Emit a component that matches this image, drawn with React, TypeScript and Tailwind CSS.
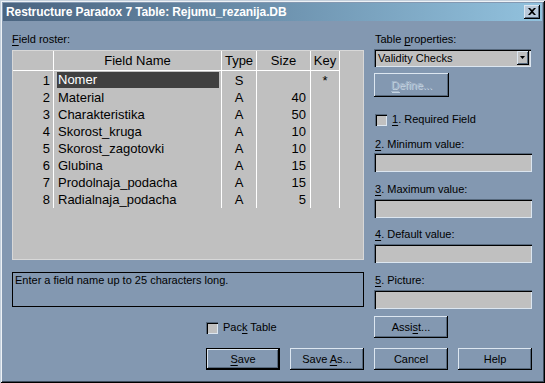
import type { ReactNode } from "react";

const raised =
  "shadow-[inset_-1px_-1px_0_#000,inset_1px_1px_0_#dce6f0,inset_-2px_-2px_0_#56687c]";
const sunken =
  "shadow-[inset_1px_1px_0_#56687c,inset_2px_2px_0_#000,inset_-1px_-1px_0_#dce6f0,inset_-2px_-2px_0_#c0c0c0]";

const FIELDS = [
  { name: "Nomer", type: "S", size: "", key: "*" },
  { name: "Material", type: "A", size: "40", key: "" },
  { name: "Charakteristika", type: "A", size: "50", key: "" },
  { name: "Skorost_kruga", type: "A", size: "10", key: "" },
  { name: "Skorost_zagotovki", type: "A", size: "10", key: "" },
  { name: "Glubina", type: "A", size: "15", key: "" },
  { name: "Prodolnaja_podacha", type: "A", size: "15", key: "" },
  { name: "Radialnaja_podacha", type: "A", size: "5", key: "" },
];

function U({ children }: { children: ReactNode }) {
  return <span className="underline decoration-1 underline-offset-[2px]">{children}</span>;
}

function Button({ children, width = "w-[74px]", isDefault = false, disabled = false }: {
  children: ReactNode;
  width?: string;
  isDefault?: boolean;
  disabled?: boolean;
}) {
  const face = (
    <div
      className={`flex h-full w-full items-center justify-center ${raised} ${
        disabled ? "text-[#a3b6ca] [text-shadow:1px_1px_0_#c6d4e2]" : "text-black"
      }`}
    >
      <span className="whitespace-pre">{children}</span>
    </div>
  );
  return (
    <div className={`${width} ${disabled ? "h-[24px]" : "h-[22px]"} ${isDefault ? "border border-black" : ""}`}>{face}</div>
  );
}

function Field({ label, mt, imt }: { label: ReactNode; mt: string; imt: string }) {
  return (
    <>
      <div className={`${mt} h-[13px] leading-[13px] pl-px`}>{label}</div>
      <div className={`${imt} h-[19px] w-[158px] bg-[#c0c0c0] ${sunken}`} />
    </>
  );
}

function Check({ children }: { children: ReactNode }) {
  return (
    <div className="flex h-[13px] items-center gap-[5px]">
      <div className={`h-[12px] w-[12px] bg-[#c0c0c0] ${sunken}`} />
      <span className="leading-[13px]">{children}</span>
    </div>
  );
}

type Row = (typeof FIELDS)[number];

function Roster() {
  const cols = [
    { head: "", w: "w-[41px]", cell: (_f: Row, i: number) => <div className="pr-[3px] text-right">{i + 1}</div> },
    {
      head: "Field Name",
      w: "w-[168px]",
      cell: (f: Row, i: number) =>
        i === 0 ? (
          <div className="ml-[3px] mr-[2px] h-[16px] bg-[#404040] pl-[1px] leading-[16px] text-white">{f.name}</div>
        ) : (
          <div className="pl-[4px]">{f.name}</div>
        ),
    },
    { head: "Type", w: "w-[35px]", cell: (f: Row) => <div className="text-center">{f.type}</div> },
    { head: "Size", w: "w-[54px]", cell: (f: Row) => <div className="pr-[4px] text-right">{f.size}</div> },
    { head: "Key", w: "w-[29px]", cell: (f: Row) => <div className="text-center">{f.key}</div> },
  ];

  return (
    <div className="mt-[4px] flex h-[210px] w-[352px] items-start border border-[#d8d8d8] bg-[#c0c0c0] text-[13px] text-black">
      {cols.map((c) => (
        <div key={c.head || "n"} className={`${c.w} flex shrink-0 flex-col border-r border-white`}>
          <div className="flex h-[20px] items-center justify-center border-b border-white leading-[19px]">{c.head}</div>
          <div className="pt-px">
            {FIELDS.map((f, i) => (
              <div key={f.name} className="h-[17px] leading-[17px] whitespace-nowrap">
                {c.cell(f, i)}
              </div>
            ))}
          </div>
        </div>
      ))}
    </div>
  );
}

export default function App() {
  return (
    <div className="relative h-[383px] w-[545px] overflow-hidden bg-[#8398b1] font-['Liberation_Sans',Arial,sans-serif] text-[11px] text-black shadow-[inset_1px_1px_0_#c4d0dc,inset_-1px_-1px_0_#000,inset_2px_2px_0_#eef2f6,inset_-2px_-2px_0_#3f4c5c]">
      {/* Title bar */}
      <div className="mx-[3px] mt-[3px] flex h-[18px] items-center justify-between bg-linear-to-r from-[#4a6480] to-[#92c2de] pl-[3px] pr-[2px]">
        <span className="text-[12px] font-bold tracking-[-0.1px] text-white">
          Restructure Paradox 7 Table: Rejumu_rezanija.DB
        </span>
        <div className={`flex h-[14px] w-[16px] items-center justify-center bg-[#b9c9da] ${raised}`}>
          <svg width="8" height="7" viewBox="0 0 8 7" className="mb-px">
            <path d="M0 0h2l2 2 2-2h2L5 3.5 8 7H6L4 5 2 7H0l3-3.5z" fill="#000" />
          </svg>
        </div>
      </div>

      {/* Body */}
      <div className="flex gap-[10px] pl-[12px]">
        {/* Left */}
        <div className="flex w-[352px] flex-col">
          <div className="mt-[12px] h-[13px] leading-[13px]">
            <U>F</U>ield roster:
          </div>
          <Roster />
          <div className="mt-[12px] h-[35px] border border-black px-[2px] pt-[1px] leading-[13px]">
            Enter a field name up to 25 characters long.
          </div>
          <div className="ml-[194px] mt-[14px]">
            <Check>
              Pac<U>k</U> Table
            </Check>
          </div>
        </div>

        {/* Right */}
        <div className="flex w-[158px] flex-col">
          <div className="mt-[12px] h-[13px] pl-px leading-[13px]">
            Table <U>p</U>roperties:
          </div>
          <div className={`mt-[3px] flex h-[18px] w-[157px] items-center justify-between bg-[#c0c0c0] pl-[4px] pr-[2px] ${sunken}`}>
            <span className="leading-[14px]">Validity Checks</span>
            <div className={`flex h-[14px] w-[12px] items-center justify-center bg-[#c0c0c0] ${raised}`}>
              <svg width="5" height="3" viewBox="0 0 5 3" className="mb-px mr-px">
                <path d="M0 0h5L2.5 3z" fill="#000" />
              </svg>
            </div>
          </div>
          <div className="mt-[6px]">
            <Button width="w-[75px]" disabled>
              <U>D</U>efine...
            </Button>
          </div>
          <div className="ml-px mt-[16px]">
            <Check>
              <U>1</U>. Required Field
            </Check>
          </div>
          <Field label={<><U>2</U>. Minimum value:</>} mt="mt-[12px]" imt="mt-[2px]" />
          <Field label={<><U>3</U>. Maximum value:</>} mt="mt-[11px]" imt="mt-[3px]" />
          <Field label={<><U>4</U>. Default value:</>} mt="mt-[10px]" imt="mt-[3px]" />
          <Field label={<><U>5</U>. Picture:</>} mt="mt-[11px]" imt="mt-[3px]" />
          <div className="mt-[7px]">
            <Button>
              Assi<U>s</U>t...
            </Button>
          </div>
        </div>
      </div>

      {/* Buttons */}
      <div className="mt-[10px] flex pl-[206px]">
        <Button isDefault>
          <U>S</U>ave
        </Button>
        <div className="ml-[10px]">
          <Button>
            Save <U>A</U>s...
          </Button>
        </div>
        <div className="ml-[10px]">
          <Button>Cancel</Button>
        </div>
        <div className="ml-[10px]">
          <Button>Help</Button>
        </div>
      </div>
    </div>
  );
}
